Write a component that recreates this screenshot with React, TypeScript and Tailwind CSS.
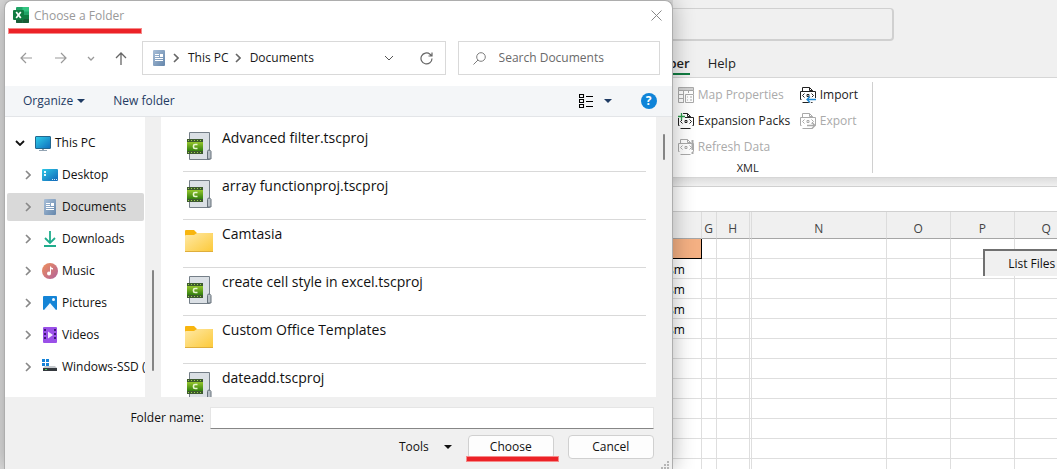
import type { ReactNode } from "react";

function ChevronRight({ className }: { className?: string }) {
  return (
    <svg width="6" height="10" viewBox="0 0 6 10" fill="none" stroke="currentColor" strokeWidth="1.6" className={className}>
      <path d="M1 1l4 4-4 4" />
    </svg>
  );
}

function ChevronDown({ className }: { className?: string }) {
  return (
    <svg width="10" height="6" viewBox="0 0 10 6" fill="none" stroke="currentColor" className={className}>
      <path d="M1 1l4 4 4-4" />
    </svg>
  );
}

function Triangle({ className }: { className?: string }) {
  return (
    <svg width="8" height="4" viewBox="0 0 8 4" fill="currentColor" className={className}>
      <path d="M0 0h8L4 4z" />
    </svg>
  );
}

function ExcelIcon() {
  return (
    <svg width="16" height="16" viewBox="0 0 16 16">
      <rect x="3" width="13" height="16" rx="1" fill="#21a366" />
      <path d="M9.500 0H15a1 1 0 0 1 1 1v3.500H9.500z" fill="#33c481" />
      <path d="M3 4h6.500v4H3z" fill="#107c41" />
      <path d="M3 8h6.500v8H4a1 1 0 0 1-1-1z" fill="#185c37" />
      <path d="M9.500 8H16v4H9.500z" fill="#107c41" />
      <path d="M9.500 12H16v3a1 1 0 0 1-1 1H9.500z" fill="#185c37" />
      <rect y="3" width="11" height="10" rx="1" fill="#107c41" />
      <path d="M3.200 5l4.600 6M7.800 5l-4.600 6" stroke="#fff" strokeWidth="1.700" />
    </svg>
  );
}

function DocumentIcon() {
  return (
    <svg width="16" height="16" viewBox="0 0 16 16">
      <defs>
        <linearGradient id="doc" x1="0" y1="0" x2="1" y2="1">
          <stop stopColor="#a9bfd8" />
          <stop offset="1" stopColor="#6486ab" />
        </linearGradient>
      </defs>
      <rect x="2" width="12" height="16" rx="1" fill="url(#doc)" />
      <path d="M4 4.500h4M4 6.500h4M4 8.500h8M4 10.500h8" stroke="#fff" />
      <path d="M9 4h3v3H9z" fill="#fff" />
    </svg>
  );
}

function MonitorIcon() {
  return (
    <svg width="16" height="16" viewBox="0 0 16 16">
      <defs>
        <linearGradient id="screen" x1="0" y1="0" x2="1" y2="1">
          <stop stopColor="#2fd0ea" />
          <stop offset="1" stopColor="#0f6cbd" />
        </linearGradient>
      </defs>
      <path d="M7 13h2v2h3v1H4v-1h3z" fill="#93a4b3" />
      <rect x=".5" y="1.500" width="15" height="12" rx=".5" fill="url(#screen)" stroke="#23678f" />
    </svg>
  );
}

function DesktopIcon() {
  return (
    <svg width="16" height="16" viewBox="0 0 16 16">
      <defs>
        <linearGradient id="desk" x1="0" y1="0" x2="1" y2="1">
          <stop stopColor="#2cc8e6" />
          <stop offset="1" stopColor="#1266b8" />
        </linearGradient>
      </defs>
      <rect y="2" width="16" height="12" rx="1" fill="url(#desk)" />
      <path d="M2 4h2v2H2zM2 7h2v2H2z" fill="#e9f8fd" />
      <path d="M10 12.500h1M12 12.500h1M14 12.500h1" stroke="#d5ecf8" />
    </svg>
  );
}

function DownloadsIcon() {
  return (
    <svg width="16" height="16" viewBox="0 0 16 16" fill="none" stroke="#1fac8c" strokeWidth="1.800">
      <path d="M8 0v12M3 7l5 5 5-5M2 15h12" />
    </svg>
  );
}

function MusicIcon() {
  return (
    <svg width="16" height="16" viewBox="0 0 16 16">
      <defs>
        <linearGradient id="music" x1="0" y1="0" x2="1" y2="1">
          <stop stopColor="#f0905a" />
          <stop offset="1" stopColor="#b0609c" />
        </linearGradient>
      </defs>
      <circle cx="8" cy="8" r="8" fill="url(#music)" />
      <circle cx="7" cy="10.500" r="2" fill="#fff" />
      <path d="M8 3.500h1c.2 1 1 1.500 2 1.500v1.500c-.8 0-1.500-.2-2-.6v4.600H8z" fill="#fff" />
    </svg>
  );
}

function PicturesIcon() {
  return (
    <svg width="16" height="16" viewBox="0 0 16 16">
      <rect x="1" y="1" width="14" height="14" rx="1" fill="#1484d6" />
      <path d="M2 15l6-7 6 7z" fill="#f2f9ff" />
      <circle cx="11.500" cy="4.500" r="1.500" fill="#f2f9ff" />
    </svg>
  );
}

function VideosIcon() {
  return (
    <svg width="16" height="16" viewBox="0 0 16 16">
      <rect x="1" y="0" width="14" height="16" rx="1" fill="#9a50e8" />
      <path d="M3 2v12M13 2v12" stroke="#3f1a78" strokeWidth="2" strokeDasharray="2 2" />
      <path d="M6 4.500v7L11 8z" fill="#f4eaff" />
    </svg>
  );
}

function DriveIcon() {
  return (
    <svg width="16" height="16" viewBox="0 0 16 16">
      <path d="M0 0h3v3H0zM4 0h3v3H4zM0 4h3v3H0zM4 4h3v3H4z" fill="#1583d8" />
      <path d="M3 7h10l2 2H1z" fill="#c5c9cd" />
      <path d="M1 9h14v3H1z" fill="#34393e" />
      <path d="M3 10h2v1H3z" fill="#43d35b" />
    </svg>
  );
}

function FolderIcon() {
  return (
    <svg width="28" height="22" viewBox="0 0 28 22" className="mt-[10px]">
      <defs>
        <linearGradient id="folder" x1="0" y1="0" x2="1" y2="1">
          <stop stopColor="#ffe9a6" />
          <stop offset="1" stopColor="#fcc938" />
        </linearGradient>
      </defs>
      <path d="M0 1q0-1 1-1h8l3 3h15q1 0 1 1v6H0z" fill="#f8b50e" />
      <path d="M0 6q0-1 1-1h8l3-2h15q1 0 1 1v17q0 1-1 1H1q-1 0-1-1z" fill="url(#folder)" />
      <path d="M0 21.500h28" stroke="#dfae3c" />
    </svg>
  );
}

function ProjectIcon() {
  return (
    <svg width="28" height="28" viewBox="0 0 28 28" className="mt-2">
      <defs>
        <linearGradient id="film" x1="0" y1="0" x2="0" y2="1">
          <stop stopColor="#94c62c" />
          <stop offset="1" stopColor="#327f0e" />
        </linearGradient>
      </defs>
      <path d="M4.500.5h20v27h-20z" fill="#dbe0e5" stroke="#757f88" />
      <path d="M22.500 27V19.500q0-1.500 1.500-1.500t2 1.500V27z" fill="#b7bfc6" stroke="#66717a" />
      <path d="M2 7h16v15H2z" fill="#3d5a2e" />
      <path d="M2 10h16v9H2z" fill="url(#film)" />
      <path d="M3 8.500h14M3 20.500h14" stroke="#9ad04d" strokeDasharray="1 2" />
      <path d="M12.500 12.500H10q-1.500 0-1.500 1.500v1q0 1.500 1.500 1.500h2.500" fill="none" stroke="#e8f6d0" strokeWidth="1.600" />
    </svg>
  );
}

function XmlIcon({ children }: { children?: ReactNode }) {
  return (
    <svg width="16" height="16" viewBox="0 0 16 16" fill="none" stroke="currentColor" className="shrink-0">
      <path d="M2.500 4V.5h7l3 3V4M9.500.5v3h3M1.500 12.500h-1v-8h15v8h-1M2.500 15.500h10" />
      <path d="M4.500 6.500l-2 2 2 2M11.500 6.500l2 2-2 2M7 7.500h2v2H7z" />
      {children}
    </svg>
  );
}

function MapIcon() {
  return (
    <svg width="16" height="16" viewBox="0 0 16 16" fill="none" stroke="currentColor" className="shrink-0">
      <path d="M.5.5h15v3H.5z" fill="#d2d2d2" />
      <path d="M.5 3.500v12H6M5.500 3.500v12M10.500 3.500V6M.5 7.500H6M.5 11.500H6M15.500 3.500V7M7.500 7.500h8v8h-8zM9 10h1M12 10h2M9 13h1M12 13h2" />
    </svg>
  );
}

const places = [
  { name: "Desktop", icon: <DesktopIcon /> },
  { name: "Documents", icon: <DocumentIcon />, active: true },
  { name: "Downloads", icon: <DownloadsIcon /> },
  { name: "Music", icon: <MusicIcon /> },
  { name: "Pictures", icon: <PicturesIcon /> },
  { name: "Videos", icon: <VideosIcon /> },
  { name: "Windows-SSD (", icon: <DriveIcon /> },
];

const files = [
  { name: "Advanced filter.tscproj", icon: <ProjectIcon /> },
  { name: "array functionproj.tscproj", icon: <ProjectIcon /> },
  { name: "Camtasia", icon: <FolderIcon /> },
  { name: "create cell style in excel.tscproj", icon: <ProjectIcon /> },
  { name: "Custom Office Templates", icon: <FolderIcon /> },
  { name: "dateadd.tscproj", icon: <ProjectIcon /> },
];

function FolderDialog() {
  return (
    <section
      aria-label="Choose a Folder"
      className="relative z-10 flex min-w-0 flex-[668] flex-col overflow-hidden rounded-t-lg border border-b-0 border-[#adadad] bg-white shadow-[0_0_22px_rgba(0,0,0,0.3)]"
    >
      <header className="flex h-10 shrink-0 items-start pt-[6px] pr-[10px] pl-2">
        <ExcelIcon />
        <h1 className="ml-[5px] flex-1 leading-[18px] text-[#999]">Choose a Folder</h1>
        <button aria-label="Close" className="mt-[3px] text-[#888]">
          <svg width="11" height="11" viewBox="0 0 11 11" stroke="currentColor">
            <path d="M.5.5l10 10M10.500.5l-10 10" />
          </svg>
        </button>
        <span className="absolute top-[27px] left-[3px] h-[6px] w-[134px] border border-[#f58a8a] bg-[#ec2227]" />
      </header>

      <div className="flex h-[34px] shrink-0 items-center pr-3 pl-[15px] text-[#999]">
        <button aria-label="Back">
          <svg width="12" height="12" viewBox="0 0 12 12" fill="none" stroke="currentColor" strokeWidth="1.200">
            <path d="M12 6H1M6 1L1 6l5 5" />
          </svg>
        </button>
        <button aria-label="Forward" className="ml-[23px]">
          <svg width="12" height="12" viewBox="0 0 12 12" fill="none" stroke="currentColor" strokeWidth="1.200">
            <path d="M0 6h11M6 1l5 5-5 5" />
          </svg>
        </button>
        <button aria-label="Recent locations" className="ml-5">
          <svg width="8" height="5" viewBox="0 0 8 5" fill="none" stroke="currentColor" strokeWidth="1.300">
            <path d="M1 1l3 3 3-3" />
          </svg>
        </button>
        <button aria-label="Up" className="ml-5 text-[#666]">
          <svg width="12" height="13" viewBox="0 0 12 13" fill="none" stroke="currentColor" strokeWidth="1.300">
            <path d="M6 13V1M1 6l5-5 5 5" />
          </svg>
        </button>
        <div className="ml-[15px] flex h-full min-w-0 flex-[304] items-center border border-[#d9d9d9] pr-3 pl-2 text-[#191919]">
          <DocumentIcon />
          <ChevronRight className="ml-[6px] text-[#666]" />
          <a href="#pc" className="ml-[9px] whitespace-nowrap">This PC</a>
          <ChevronRight className="ml-[6px] text-[#666]" />
          <a href="#documents" className="ml-[9px]">Documents</a>
          <button aria-label="Previous locations" className="mr-[26px] ml-auto text-[#555]">
            <ChevronDown />
          </button>
          <button aria-label="Refresh" className="text-[#666]">
            <svg width="13" height="13" viewBox="0 0 13 13" fill="none" stroke="currentColor" strokeWidth="1.200">
              <path d="M12 6.500A5.500 5.500 0 1 1 10 2.200L12 4M12 .5V4H8.500" />
            </svg>
          </button>
        </div>
        <label className="ml-3 flex h-full min-w-0 flex-[201] items-center border border-[#d9d9d9] pl-[14px]">
          <svg width="13" height="13" viewBox="0 0 13 13" fill="none" stroke="#7d7d7d" className="shrink-0">
            <circle cx="8" cy="5" r="4.300" />
            <path d="M5 8l-4.500 4.500" />
          </svg>
          <input
            aria-label="Search Documents"
            placeholder="Search Documents"
            className="ml-[13px] w-full min-w-0 bg-transparent outline-none placeholder:text-[#6a6a6a]"
          />
        </label>
      </div>

      <div className="mt-[11px] flex h-[31px] shrink-0 items-center border-b border-[#e3e5e8] bg-[#f4f6f8] pr-[15px] pl-[18px] text-[#1f3b63]">
        <button className="flex items-center gap-1">
          Organize
          <Triangle />
        </button>
        <button className="ml-7">New folder</button>
        <button aria-label="Change your view" className="mr-[29px] ml-auto flex items-center gap-[10px]">
          <svg width="15" height="15" viewBox="0 0 15 15" fill="none" stroke="#000" strokeWidth="1.100">
            <path d="M.5.5h4v3h-4zM.5 5.500h4v3h-4zM.5 10.500h4v3h-4zM7 2.500h7M7 7.500h7M7 12.500h7" />
          </svg>
          <Triangle />
        </button>
        <button aria-label="Help" className="flex size-4 items-center justify-center rounded-full bg-[#0f84d8] font-bold text-white">
          ?
        </button>
      </div>

      <div className="flex min-h-0 flex-1 bg-[#f0f0f0]">
        <nav className="flex w-[140px] shrink-0 flex-col gap-1 overflow-hidden bg-white pt-3 pr-px pl-[2px] text-[#111]">
          <a href="#pc" className="flex h-7 shrink-0 items-center pl-2">
            <ChevronDown className="stroke-[1.800]" />
            <span className="mr-1 ml-[10px]">
              <MonitorIcon />
            </span>
            This PC
          </a>
          {places.map((place) => (
            <a
              key={place.name}
              href={`#${place.name}`}
              className={`flex h-7 shrink-0 items-center rounded-xs pl-[18px] whitespace-nowrap ${place.active ? "bg-[#d9d9d9]" : ""}`}
            >
              <ChevronRight className="shrink-0 text-[#888]" />
              <span className="mr-1 ml-[11px] shrink-0">{place.icon}</span>
              {place.name}
            </a>
          ))}
        </nav>
        <div className="flex w-4 shrink-0 justify-center pt-[153px]">
          <div className="h-[101px] w-[2px] rounded-full bg-[#858585]" />
        </div>
        <ul className="min-w-0 flex-1 overflow-hidden border-l-2 border-white bg-white pt-[7px] pr-[10px] pl-5 text-sm text-[#111]">
          {files.map((file) => (
            <li key={file.name} className="flex h-12 border-b border-[#d9d9d9] pl-[2px]">
              {file.icon}
              <span className="ml-[9px] pt-1 leading-5">{file.name}</span>
            </li>
          ))}
        </ul>
        <div className="flex w-4 shrink-0 justify-center pt-[17px]">
          <div className="h-[26px] w-[2px] rounded-full bg-[#858585]" />
        </div>
      </div>

      <footer className="relative shrink-0 bg-[#f0f0f0] pt-[10px] pr-[18px] pb-[10px] text-[#111]">
        <div className="flex items-center">
          <label htmlFor="folder-name" className="w-[205px] shrink-0 pr-[6px] text-right">
            Folder name:
          </label>
          <input
            id="folder-name"
            className="h-[22px] min-w-0 flex-1 border border-[#e5e5e5] border-b-[#868686] bg-white px-1 outline-none"
          />
        </div>
        <div className="mt-[6px] flex items-center justify-end">
          <button className="flex items-center gap-[15px]">
            Tools
            <Triangle />
          </button>
          <button className="relative ml-4 h-6 w-[86px] rounded-sm border border-[#d0d0d0] bg-[#fdfdfd]">
            Choose
            <span className="absolute top-[20px] left-[-3px] h-[6px] w-[93px] border border-[#f58a8a] bg-[#ec2227]" />
          </button>
          <button className="ml-[14px] h-6 w-[86px] rounded-sm border border-[#d0d0d0] bg-[#fdfdfd]">Cancel</button>
        </div>
        <svg width="8" height="8" viewBox="0 0 8 8" fill="#b5b5b5" className="absolute right-[3px] bottom-0">
          <path d="M6 0h2v2H6zM3 3h2v2H3zM6 3h2v2H6zM0 6h2v2H0zM3 6h2v2H3zM6 6h2v2H6z" />
        </svg>
      </footer>
    </section>
  );
}

function Ribbon() {
  return (
    <div className="flex h-[101px] shrink-0 overflow-hidden border-y border-[#d6d6d6] bg-white pt-1 whitespace-nowrap text-[#222]">
      <div className="flex h-[91px] flex-col border-r border-[#d0d0d0] pr-4 pl-[5px]">
        <div className="grid grid-cols-[122px_56px] grid-rows-[26px_26px_26px] items-center">
          <button disabled className="flex items-center gap-1 text-[#aaa]">
            <MapIcon />
            Map Properties
          </button>
          <button className="flex items-center gap-1">
            <XmlIcon>
              <path d="M16 12.500H8M11 9.500l-3 3 3 3" stroke="#fff" strokeWidth="3" />
              <path d="M16 12.500H7M10 9.500l-3 3 3 3" stroke="#1c86d1" strokeWidth="1.300" />
            </XmlIcon>
            Import
          </button>
          <button className="flex items-center gap-1">
            <XmlIcon>
              <path d="M0 3.500h7M3.500 0v7" stroke="#fff" strokeWidth="3" />
              <path d="M0 3.500h7M3.500 0v7" stroke="#2c9a4b" strokeWidth="1.300" />
            </XmlIcon>
            Expansion Packs
          </button>
          <button disabled className="flex items-center gap-1 text-[#aaa]">
            <XmlIcon>
              <path d="M7 12.500h8" stroke="#fff" strokeWidth="3" />
              <path d="M7 12.500h8M12 9.500l3 3-3 3" strokeWidth="1.300" />
            </XmlIcon>
            Export
          </button>
          <button disabled className="flex items-center gap-1 text-[#aaa]">
            <XmlIcon>
              <path d="M14.500 1v10M14.500 13v2" strokeWidth="2" />
            </XmlIcon>
            Refresh Data
          </button>
        </div>
        <div className="pr-[38px] text-center text-[11px] leading-4">XML</div>
      </div>
    </div>
  );
}

function Sheet() {
  const columns = ["", "G", "H", "", "N", "O", "P", "Q"];

  return (
    <div className="relative min-h-0 flex-1 overflow-hidden bg-white">
      <table className="w-[406px] table-fixed border-separate border-spacing-0">
        <colgroup>
          <col className="w-[29px]" />
          <col className="w-[15px]" />
          <col className="w-[33px]" />
          <col className="w-[2px]" />
          <col className="w-[135px]" />
          <col className="w-[64px]" />
          <col className="w-[64px]" />
          <col className="w-[64px]" />
        </colgroup>
        <thead>
          <tr className="h-[27px] bg-[#f0f0f0] text-[#444]">
            {columns.map((column, i) => (
              <th key={i} className="border-r border-b border-r-[#dcdcdc] border-b-[#a6a6a6] p-0 pt-2 leading-4 font-normal">
                {column}
              </th>
            ))}
          </tr>
        </thead>
        <tbody>
          {Array.from({ length: 40 }, (_, row) => (
            <tr key={row} className="h-5">
              {columns.map((_, i) => (
                <td
                  key={i}
                  className={`overflow-hidden border-r border-b p-0 ${row === 0 && i === 0 ? "border-black bg-[#f4b083]" : "border-[#dedede]"}`}
                >
                  {i === 0 && row > 0 && row < 5 && <div className="flex justify-end pt-[2px] pr-4 leading-4">sm</div>}
                </td>
              ))}
            </tr>
          ))}
        </tbody>
      </table>
      <button className="absolute top-[37px] left-[310px] h-[27px] w-24 border-t-2 border-l-2 border-[#707070] bg-[#f0f0f0] text-[#111]">
        List Files
      </button>
    </div>
  );
}

function ExcelWindow() {
  return (
    <main className="flex min-w-0 flex-[385] flex-col bg-[#f0f0f0]">
      <div className="h-[52px] shrink-0 pt-2">
        <input
          aria-label="Search"
          className="h-[33px] w-[221px] rounded-r-[4px] border-t border-r-2 border-b-2 border-[#d0d0d0] bg-transparent px-2 outline-none"
        />
      </div>
      <nav className="flex h-[25px] shrink-0 text-[13px] leading-[23px] text-[#222]">
        <div className="flex w-[17px] justify-end overflow-hidden">
          <a href="#developer" className="h-[23px] border-b-2 border-[#107c41] font-semibold">
            per
          </a>
        </div>
        <a href="#help" className="ml-[18px]">
          Help
        </a>
      </nav>
      <Ribbon />
      <div className="h-2 shrink-0 bg-linear-to-b from-[#dedede] to-[#f0f0f0]" />
      <input aria-label="Formula bar" className="h-[26px] w-full shrink-0 border-y border-[#d0d0d0] bg-white px-2 outline-none" />
      <Sheet />
    </main>
  );
}

export default function App() {
  return (
    <div className="flex h-screen overflow-hidden bg-[#dedede] pl-1 font-['Open_Sans','Noto_Sans',sans-serif] text-xs">
      <FolderDialog />
      <ExcelWindow />
    </div>
  );
}
